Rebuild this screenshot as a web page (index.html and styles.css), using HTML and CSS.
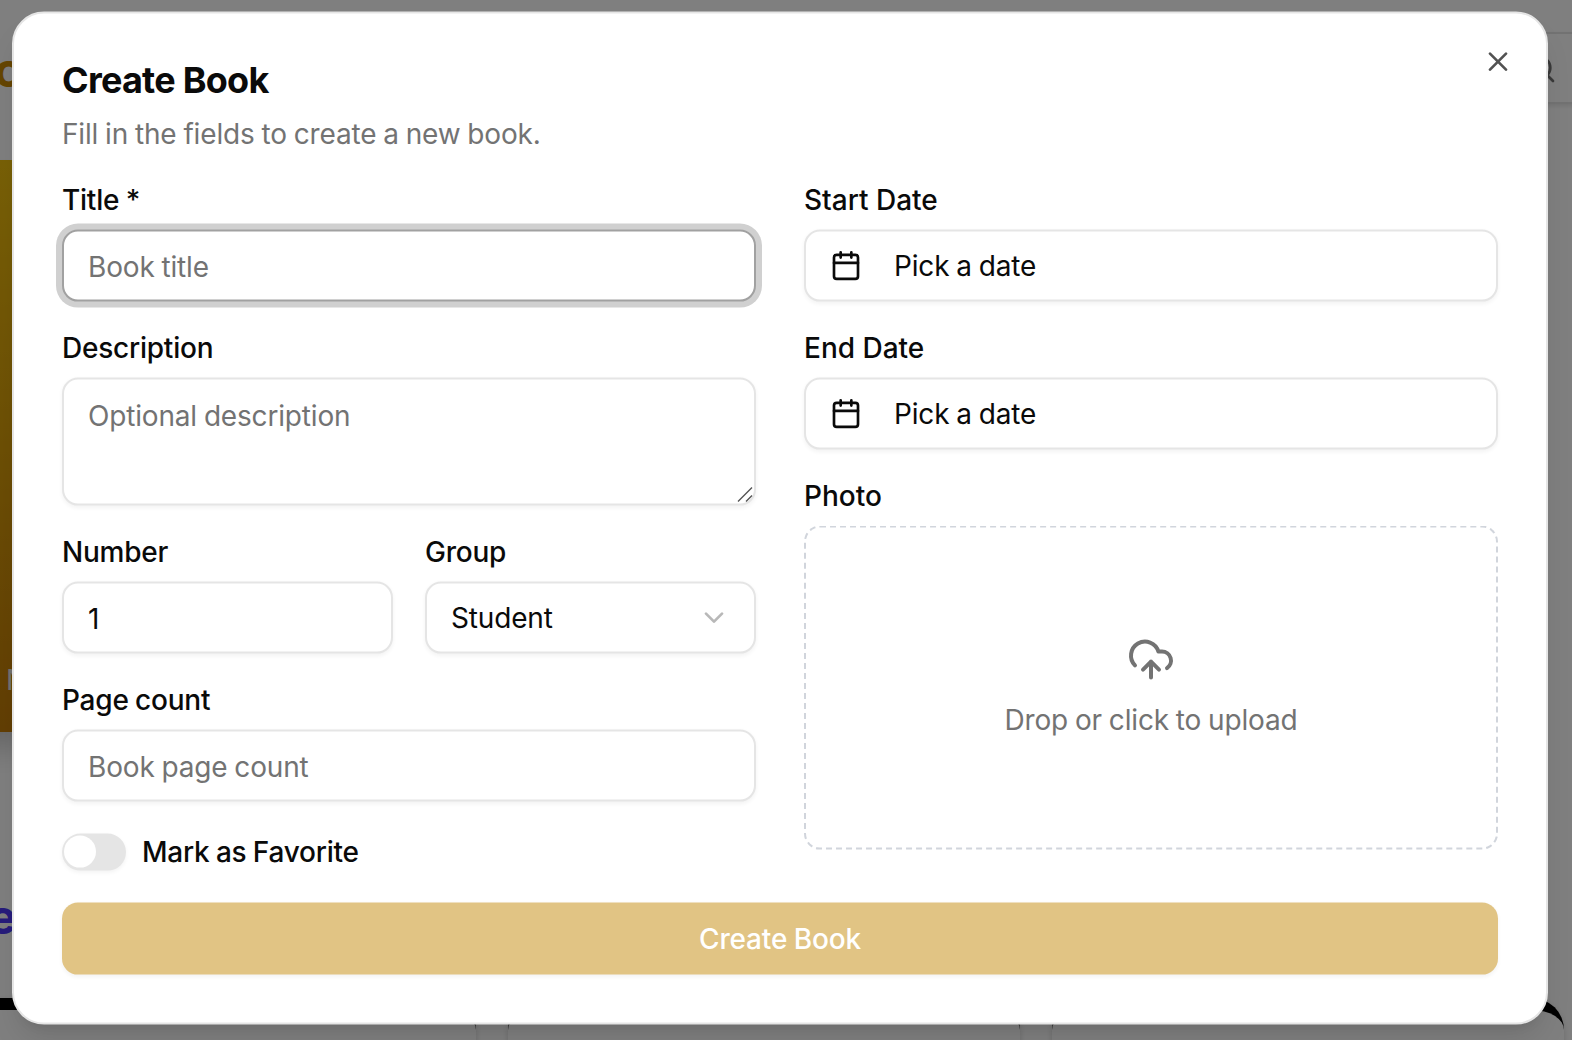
FILE: index.html
```html
<!DOCTYPE html>
<html lang="en">
<head>
<meta charset="utf-8">
<title>Create Book</title>
<link rel="stylesheet" href="styles.css">
</head>
<body>
<div class="page" aria-hidden="true">
  <div class="brand">o</div>
  <div class="toolbar">
    <svg class="search-icon" viewBox="0 0 24 24"><circle cx="11" cy="11" r="8"/><path d="m21 21-4.3-4.3"/></svg>
  </div>
  <div class="hero"><span class="hero-text">N</span></div>
  <div class="section-title">e</div>
  <div class="cards"><div class="card"></div><div class="card"></div><div class="card"></div></div>
</div>
<div class="overlay"></div>
<main class="dialog" role="dialog">
  <button class="close" aria-label="Close"><svg class="icon" viewBox="0 0 24 24"><path d="M18 6 6 18M6 6l12 12"/></svg></button>
  <header class="header">
    <h1 class="title">Create Book</h1>
    <p class="subtitle">Fill in the fields to create a new book.</p>
  </header>
  <form class="form">
    <div class="columns">
      <div class="column">
        <div class="field">
          <label class="label">Title *</label>
          <div class="input input-focus placeholder">Book title</div>
        </div>
        <div class="field">
          <label class="label">Description</label>
          <div class="input textarea placeholder">Optional description
            <svg class="grip" viewBox="0 0 16 16"><path d="M1 15 15 1M9 15l6-6"/></svg>
          </div>
        </div>
        <div class="pair">
          <div class="field">
            <label class="label">Number</label>
            <div class="input typed">1</div>
          </div>
          <div class="field">
            <label class="label">Group</label>
            <div class="input select"><span>Student</span><svg class="icon chevron" viewBox="0 0 24 24"><path d="m6 9 6 6 6-6"/></svg></div>
          </div>
        </div>
        <div class="field">
          <label class="label">Page count</label>
          <div class="input placeholder">Book page count</div>
        </div>
        <div class="switch-row">
          <span class="switch"><span class="thumb"></span></span>
          <label class="label">Mark as Favorite</label>
        </div>
      </div>
      <div class="column">
        <div class="field">
          <label class="label label-wide">Start Date</label>
          <div class="input date"><svg class="icon" viewBox="0 0 24 24"><path d="M8 2v4M16 2v4M3 10h18"/><rect x="3" y="4" width="18" height="18" rx="2"/></svg><span>Pick a date</span></div>
        </div>
        <div class="field">
          <label class="label label-wide">End Date</label>
          <div class="input date"><svg class="icon" viewBox="0 0 24 24"><path d="M8 2v4M16 2v4M3 10h18"/><rect x="3" y="4" width="18" height="18" rx="2"/></svg><span>Pick a date</span></div>
        </div>
        <div class="field">
          <label class="label label-wide">Photo</label>
          <div class="dropzone">
            <svg class="icon cloud" viewBox="0 0 24 24"><path d="M12 13v8M4 14.899A7 7 0 1 1 15.71 8h1.79a4.5 4.5 0 0 1 2.5 8.242M8 17l4-4 4 4"/></svg>
            <span>Drop or click to upload</span>
          </div>
        </div>
      </div>
    </div>
    <button class="submit" type="button">Create Book</button>
  </form>
</main>
</body>
</html>
```
FILE: styles.css
```css
* { box-sizing: border-box; }
body {
  margin: 0;
  width: 1572px;
  height: 1040px;
  overflow: hidden;
  position: relative;
  background: #fff;
  color: #0a0a0a;
  font: 430 28px/40px Inter, "Liberation Sans", sans-serif;
  letter-spacing: -.17px;
  word-spacing: -.8px;
}
h1, p { margin: 0; }
button { font: inherit; letter-spacing: inherit; word-spacing: inherit; border: 0; padding: 0; background: none; }

/* Page behind the dialog */
.page { position: absolute; inset: 0; overflow: hidden; }
.brand { position: absolute; left: -6px; top: 42px; font-weight: 700; font-size: 48px; line-height: 56px; color: #ca8a04; }
.toolbar { position: absolute; left: 1400px; right: -20px; top: 32px; height: 72px; border: 2px solid #e5e5e5; box-shadow: 0 2px 4px rgba(0,0,0,.1); }
.search-icon { position: absolute; left: 123px; top: 19px; width: 32px; height: 32px; fill: none; stroke: #737373; stroke-width: 2; stroke-linecap: round; }
.hero { position: absolute; left: -500px; top: 160px; width: 540px; height: 572px; background: linear-gradient(175deg, #f4c60e, #c47c08); box-shadow: 0 20px 30px -6px rgba(0,0,0,.2); }
.hero-text { position: absolute; left: 506px; top: 500px; color: #e5e5e5; }
.section-title { position: absolute; left: -12px; top: 887px; font-weight: 700; font-size: 48px; line-height: 60px; color: #4f39f6; }
.cards { position: absolute; left: -36px; top: 998px; display: flex; gap: 32px; }
.card { width: 512px; height: 200px; border-top: 12px solid #000; border-radius: 32px; box-shadow: 0 2px 6px rgba(0,0,0,.15); }
.overlay { position: absolute; inset: 0; background: rgba(0,0,0,.5); }

/* Dialog */
.dialog {
  position: absolute;
  left: 12px;
  top: 12px;
  width: 1536px;
  transform: translateY(-.4px);
  padding: 48px;
  border: 2px solid #e5e5e5;
  border-radius: 32px;
  background: #fff;
  box-shadow: 0 20px 30px -6px rgba(0,0,0,.1), 0 8px 12px -8px rgba(0,0,0,.1);
}
.icon { width: 32px; height: 32px; flex: none; display: block; fill: none; stroke: currentColor; stroke-width: 2; stroke-linecap: round; stroke-linejoin: round; }
.close { position: absolute; right: 32px; top: 32px; color: #0a0a0a; opacity: .7; }
.header { display: flex; flex-direction: column; gap: 16px; margin-bottom: 32px; }
.title { font-size: 36px; line-height: 36px; font-weight: 650; letter-spacing: -.75px; word-spacing: 0; }
.subtitle { color: #737373; }
.form { display: flex; flex-direction: column; gap: 32px; }
.columns { display: grid; grid-template-columns: 1fr 1fr; gap: 48px; }
.column { display: flex; flex-direction: column; gap: 32px; }
.pair { display: grid; grid-template-columns: 1fr 1fr; gap: 32px; }
.field { display: flex; flex-direction: column; gap: 16px; }
.label { line-height: 28px; font-weight: 550; letter-spacing: -.23px; }
.label-wide { letter-spacing: 0; word-spacing: 0; }
.input {
  display: flex;
  align-items: center;
  height: 72px;
  padding: 0 24px;
  border: 2px solid #e5e5e5;
  border-radius: 16px;
  background: #fff;
  box-shadow: 0 2px 4px rgba(0,0,0,.05);
}
.placeholder { color: #737373; padding-top: 2px; }
.typed { padding-top: 2px; }
.input-focus { border-color: #a1a1a1; box-shadow: 0 0 0 6px #d0d0d0; }
.textarea { position: relative; align-items: flex-start; height: 128px; padding-top: 16px; }
.grip { position: absolute; right: 1px; bottom: 1px; width: 16px; height: 16px; fill: none; stroke: #555; stroke-width: 1.4; }
.select { justify-content: space-between; }
.chevron { color: #737373; opacity: .5; }
.date { gap: 32px; }
.switch-row { display: flex; align-items: center; gap: 16px; height: 36.8px; }
.switch { display: flex; align-items: center; width: 64px; height: 36.8px; padding: 0 2px; border-radius: 20px; background: #e5e5e5; box-shadow: 0 2px 4px rgba(0,0,0,.05); }
.thumb { width: 32px; height: 32px; border-radius: 50%; background: #fff; }
.dropzone {
  display: flex;
  flex-direction: column;
  align-items: center;
  justify-content: center;
  gap: 16px;
  height: 324px;
  border: 2px dashed #d1d5dc;
  border-radius: 16px;
  color: #737373;
}
.cloud { width: 48px; height: 48px; }
.submit { height: 72px; border-radius: 16px; background: #e1c484; color: #fff; font-weight: 550; box-shadow: 0 2px 4px rgba(0,0,0,.05); }
```
